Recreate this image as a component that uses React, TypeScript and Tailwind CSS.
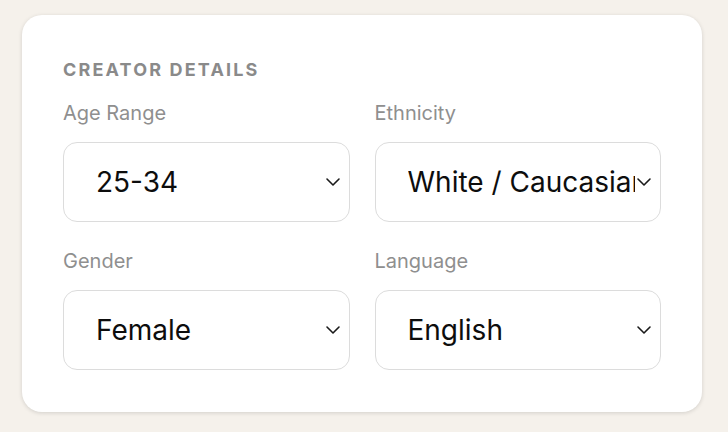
import { useState } from 'react'

interface SelectFieldProps {
  label: string
  value: string
  options: string[]
  onChange: (value: string) => void
}

function SelectField({ label, value, options, onChange }: SelectFieldProps) {
  return (
    <div className="flex flex-col">
      <label className="text-[20px] leading-6 text-[#8f8f8f] mb-[17px]">{label}</label>
      <div className="relative">
        <select
          value={value}
          onChange={(e) => onChange(e.target.value)}
          className="appearance-none w-full h-[80px] rounded-[14px] border-[1.5px] border-[#dcdcdc] bg-white pl-[32px] pr-[25px] text-[28px] text-[#0d0d0d] outline-none"
        >
          {options.map((o) => (
            <option key={o} value={o}>
              {o}
            </option>
          ))}
        </select>
        <svg
          className="pointer-events-none absolute right-[9px] top-1/2 -translate-y-1/2"
          width="16"
          height="10"
          viewBox="0 0 16 10"
          fill="none"
        >
          <path d="M2 2l6 6 6-6" stroke="#1a1a1a" strokeWidth="1.6" strokeLinecap="round" strokeLinejoin="round" />
        </svg>
      </div>
    </div>
  )
}

export default function App() {
  const [age, setAge] = useState('25-34')
  const [ethnicity, setEthnicity] = useState('White / Caucasian')
  const [gender, setGender] = useState('Female')
  const [language, setLanguage] = useState('English')

  return (
    <div className="min-h-screen bg-[#f5f1eb] pt-[15px] pl-[22px]" style={{ fontFamily: 'Inter, "Noto Sans", sans-serif' }}>
      <div className="w-[680px] h-[397px] rounded-[20px] bg-white shadow-[0_1px_4px_rgba(0,0,0,0.14)] px-[41px] pt-[45px]">
        <h2 className="text-[18px] leading-5 font-bold uppercase tracking-[0.12em] text-[#8a8a8a]">Creator Details</h2>
        <div className="grid grid-cols-2 gap-x-[25px] gap-y-[27px] mt-[21px]">
          <SelectField label="Age Range" value={age} onChange={setAge} options={['18-24', '25-34', '35-44', '45-54', '55+']} />
          <SelectField
            label="Ethnicity"
            value={ethnicity}
            onChange={setEthnicity}
            options={['White / Caucasian', 'Black / African American', 'Hispanic / Latino', 'Asian', 'Other']}
          />
          <SelectField label="Gender" value={gender} onChange={setGender} options={['Female', 'Male', 'Non-binary']} />
          <SelectField label="Language" value={language} onChange={setLanguage} options={['English', 'Spanish', 'French', 'German']} />
        </div>
      </div>
    </div>
  )
}
